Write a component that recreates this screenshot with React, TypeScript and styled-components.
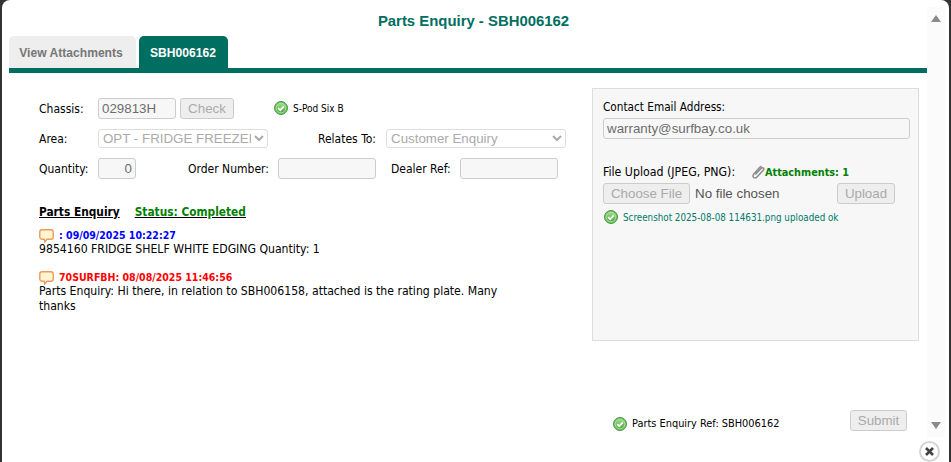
import React from "react";
import styled, { createGlobalStyle } from "styled-components";

const GlobalStyle = createGlobalStyle`
  html, body {
    margin: 0;
    height: 100%;
    background: #333;
    overflow: hidden;
  }
`;

const BODY_FONT = `"DejaVu Sans Condensed", "DejaVu Sans", sans-serif`;
const FIELD_FONT = `"Liberation Sans", Arial, sans-serif`;

const Modal = styled.div`
  position: relative;
  box-sizing: border-box;
  width: 947px;
  height: 462px;
  margin-left: 2px;
  background: #fff;
  border-radius: 8px 8px 0 0;
  font-family: ${BODY_FONT};
  font-size: 12px;
  color: #000;
  display: flex;
  flex-direction: column;
  padding: 0 22px 0 7px;
`;

const Title = styled.h1`
  margin: 0;
  height: 36px;
  padding: 12px 0 0 0;
  box-sizing: border-box;
  text-align: center;
  font-family: ${FIELD_FONT};
  font-size: 14.9px;
  line-height: 18px;
  font-weight: bold;
  color: #006e60;
  width: 929px;
`;

const TabBar = styled.div`
  display: flex;
  gap: 3px;
  height: 32px;
  border-bottom: 5px solid #006e60;
`;

const Tab = styled.div<{ $active?: boolean; $width: number }>`
  box-sizing: border-box;
  width: ${(p) => p.$width}px;
  height: 32px;
  padding-right: ${(p) => (p.$active ? "1px" : "3px")};
  border-radius: 5px 5px 0 0;
  background: ${(p) => (p.$active ? "#006e60" : "#eee")};
  color: ${(p) => (p.$active ? "#fff" : "#777")};
  font-family: ${FIELD_FONT};
  font-size: 12.1px;
  font-weight: bold;
  line-height: 35px;
  text-align: center;
`;

const Body = styled.div`
  display: flex;
  height: 267px;
  padding: 15px 8px 0 30px;
  box-sizing: border-box;
`;

const LeftColumn = styled.div`
  width: 553px;
  padding-top: 10px;
`;

const FormRow = styled.div`
  display: flex;
  align-items: center;
  height: 20px;
  margin-bottom: 10px;
`;

const Label = styled.label<{ $width: number; $gap?: number }>`
  width: ${(p) => p.$width}px;
  margin-left: ${(p) => p.$gap ?? 0}px;
  padding-top: 2px;
  flex: none;
  white-space: nowrap;
`;

const UploadLabel = styled(Label)`
  font-size: 12.25px;
`;

const TextField = styled.input<{ $width: number; $right?: boolean }>`
  box-sizing: border-box;
  width: ${(p) => p.$width}px;
  height: 21px;
  padding: 0 3px;
  border: 1px solid #ccc;
  border-radius: 3px;
  background: #f7f7f7;
  color: #6d6d6d;
  font-family: ${FIELD_FONT};
  font-size: 13.333px;
  text-align: ${(p) => (p.$right ? "right" : "left")};
  flex: none;
  outline: none;
  opacity: 1;
`;

const SelectField = styled.select<{ $width: number }>`
  box-sizing: border-box;
  width: ${(p) => p.$width}px;
  height: 19px;
  border: 1px solid #ddd;
  border-radius: 3px;
  background: #fff;
  color: #aaa;
  font-family: ${FIELD_FONT};
  font-size: 13.333px;
  flex: none;
  opacity: 1;
`;

const ActionButton = styled.button<{ $width: number; $gap?: number }>`
  box-sizing: border-box;
  width: ${(p) => p.$width}px;
  height: 21px;
  margin-left: ${(p) => p.$gap ?? 0}px;
  padding: 0;
  border: 1px solid #ccc;
  border-radius: 3px;
  background: #eee;
  color: #aaa;
  font-family: ${FIELD_FONT};
  font-size: 13.333px;
  flex: none;
`;

const ModelName = styled.span`
  display: flex;
  align-items: center;
  gap: 5px;
  margin-left: 40px;
  font-size: 10px;
`;

const Heading = styled.div`
  display: flex;
  gap: 15px;
  margin-top: 26px;
  font-size: 11.8px;
  font-weight: bold;
  line-height: 16px;
  text-decoration: underline;
`;

const Status = styled.span`
  color: #008000;
`;

const Message = styled.div`
  width: 465px;
  margin-top: 9px;
  margin-bottom: 14px;
  font-size: 12.13px;
  line-height: 15px;
`;

const MessageHead = styled.div<{ $color: string }>`
  display: flex;
  align-items: center;
  gap: 5px;
  height: 13px;
  font-size: 10.5px;
  font-weight: bold;
  color: ${(p) => p.$color};
`;

const SidePanel = styled.div`
  box-sizing: border-box;
  width: 327px;
  height: 253px;
  padding: 10px 8px 0 10px;
  background: #f7f7f7;
  border: 1px solid #ddd;
`;

const PanelLabel = styled.div`
  font-size: 11.7px;
  line-height: 16px;
  margin-bottom: 3px;
`;

const UploadHead = styled.div`
  display: flex;
  align-items: center;
  margin-top: 24px;
  height: 16px;
`;

const Attachments = styled.span`
  display: flex;
  align-items: center;
  margin-left: 16px;
  padding-top: 2px;
  color: #008000;
  font-size: 10.8px;
  font-weight: bold;
`;

const UploadRow = styled.div`
  display: flex;
  align-items: center;
  margin-top: 4px;
`;

const FileField = styled.input`
  width: 234px;
  flex: none;
  font-family: ${FIELD_FONT};
  font-size: 13.333px;
  color: #555;

  &::file-selector-button {
    box-sizing: border-box;
    width: 87px;
    height: 21px;
    margin-right: 5px;
    border: 1px solid #ccc;
    border-radius: 3px;
    background: #eee;
    color: #aaa;
    font-family: ${FIELD_FONT};
    font-size: 13.333px;
  }
`;

const UploadNote = styled.div`
  display: flex;
  align-items: center;
  gap: 5px;
  margin: 5px 0 0 1px;
  color: #00796b;
  font-size: 9.75px;
  height: 16px;
`;

const Footer = styled.div`
  display: flex;
  align-items: center;
  height: 21px;
  margin-top: 70px;
  padding-left: 604px;
`;

const FooterRef = styled.span`
  display: flex;
  align-items: center;
  gap: 5px;
  width: 237px;
  font-size: 10.9px;
  position: relative;
  top: 3px;
`;

const Scrollbar = styled.div`
  position: absolute;
  top: 7px;
  right: 4px;
  bottom: 25px;
  width: 18px;
  background: #fbfbfb;
  display: flex;
  flex-direction: column;
  justify-content: space-between;
  align-items: center;
  padding: 8px 0 8px;
  box-sizing: border-box;
`;

const Arrow = styled.span<{ $down?: boolean }>`
  width: 0;
  height: 0;
  border-left: 5px solid transparent;
  border-right: 5px solid transparent;
  ${(p) =>
    p.$down ? "border-top: 7px solid #8a8a8a;" : "border-bottom: 7px solid #8a8a8a;"}
`;

const CloseButton = styled.button`
  position: absolute;
  left: 917px;
  top: 441px;
  box-sizing: border-box;
  width: 21px;
  height: 21px;
  padding: 0;
  border: 2px solid #d5d5d5;
  border-radius: 50%;
  background: #fff;
  display: flex;
  align-items: center;
  justify-content: center;
`;

function CheckIcon() {
  return (
    <svg width="14" height="14" viewBox="0 0 14 14" style={{ flex: "none" }}>
      <defs>
        <linearGradient id="okFill" x1="0" y1="0" x2="0" y2="1">
          <stop offset="0" stopColor="#a6dc8f" />
          <stop offset="1" stopColor="#45a83a" />
        </linearGradient>
      </defs>
      <circle cx="7" cy="7" r="6.5" fill="#6cbf5c" stroke="#4a9a45" />
      <circle cx="7" cy="7" r="4.8" fill="url(#okFill)" stroke="#c4e8b8" strokeWidth="0.7" />
      <path d="M4.2 7.2 6.2 9.2 9.8 5.4" fill="none" stroke="#fff" strokeWidth="1.7" />
    </svg>
  );
}

function BubbleIcon() {
  return (
    <svg width="15" height="14" viewBox="0 0 15 14" style={{ flex: "none" }}>
      <path
        d="M3 .8h9a2.2 2.2 0 0 1 2.2 2.2v5a2.2 2.2 0 0 1-2.2 2.2H8L5.8 13l-.6-2.8H3A2.2 2.2 0 0 1 .8 8V3A2.2 2.2 0 0 1 3 .8Z"
        fill="#fff6cf"
        stroke="#ee9a5c"
        strokeWidth="1.4"
      />
    </svg>
  );
}

function ClipIcon() {
  return (
    <svg width="14" height="14" viewBox="0 0 14 14">
      <path
        d="M4.4 9.6 10 3.4c.8-.9 1.9-.9 2.4-.3s.4 1.5-.4 2.4L6 12c-1 1.1-2.4 1.3-3.4.5S1.8 10.2 2.8 9L8.6 2.4c.6-.7 1.3-1 2-.9"
        fill="none"
        stroke="#8c8c8c"
        strokeWidth="1.5"
      />
    </svg>
  );
}

export default function App() {
  return (
    <>
      <GlobalStyle />
      <Modal>
        <Title>Parts Enquiry - SBH006162</Title>
        <TabBar>
          <Tab $width={127}>View Attachments</Tab>
          <Tab $width={89} $active>
            SBH006162
          </Tab>
        </TabBar>
        <Body>
          <LeftColumn>
            <FormRow>
              <Label $width={59}>Chassis:</Label>
              <TextField $width={78} defaultValue="029813H" disabled />
              <ActionButton $width={54} $gap={4} disabled>
                Check
              </ActionButton>
              <ModelName>
                <CheckIcon />
                S-Pod Six B
              </ModelName>
            </FormRow>
            <FormRow>
              <Label $width={59}>Area:</Label>
              <SelectField $width={170} disabled>
                <option>OPT - FRIDGE FREEZER</option>
              </SelectField>
              <Label $width={68} $gap={50}>
                Relates To:
              </Label>
              <SelectField $width={180} disabled>
                <option>Customer Enquiry</option>
              </SelectField>
            </FormRow>
            <FormRow>
              <Label $width={59}>Quantity:</Label>
              <TextField $width={38} $right defaultValue="0" disabled />
              <Label $width={90} $gap={52}>
                Order Number:
              </Label>
              <TextField $width={98} disabled />
              <Label $width={69} $gap={15}>
                Dealer Ref:
              </Label>
              <TextField $width={98} disabled />
            </FormRow>
            <Heading>
              <span>Parts Enquiry</span>
              <Status>Status: Completed</Status>
            </Heading>
            <Message>
              <MessageHead $color="#0000ff">
                <BubbleIcon />: 09/09/2025 10:22:27
              </MessageHead>
              9854160 FRIDGE SHELF WHITE EDGING Quantity: 1
            </Message>
            <Message>
              <MessageHead $color="#ff0000">
                <BubbleIcon />
                70SURFBH: 08/08/2025 11:46:56
              </MessageHead>
              Parts Enquiry: Hi there, in relation to SBH006158, attached is the
              rating plate. Many thanks
            </Message>
          </LeftColumn>
          <SidePanel>
            <PanelLabel>Contact Email Address:</PanelLabel>
            <TextField $width={307} defaultValue="warranty@surfbay.co.uk" disabled />
            <UploadHead>
              <UploadLabel $width={132}>File Upload (JPEG, PNG):</UploadLabel>
              <Attachments>
                <ClipIcon />
                Attachments: 1
              </Attachments>
            </UploadHead>
            <UploadRow>
              <FileField type="file" disabled />
              <ActionButton $width={58} disabled>
                Upload
              </ActionButton>
            </UploadRow>
            <UploadNote>
              <CheckIcon />
              Screenshot 2025-08-08 114631.png uploaded ok
            </UploadNote>
          </SidePanel>
        </Body>
        <Footer>
          <FooterRef>
            <CheckIcon />
            Parts Enquiry Ref: SBH006162
          </FooterRef>
          <ActionButton $width={57} disabled>
            Submit
          </ActionButton>
        </Footer>
        <Scrollbar>
          <Arrow />
          <Arrow $down />
        </Scrollbar>
        <CloseButton aria-label="Close">
          <svg width="11" height="11" viewBox="0 0 11 11">
            <path d="M2 2 9 9M9 2 2 9" stroke="#444" strokeWidth="2.6" />
          </svg>
        </CloseButton>
      </Modal>
    </>
  );
}
